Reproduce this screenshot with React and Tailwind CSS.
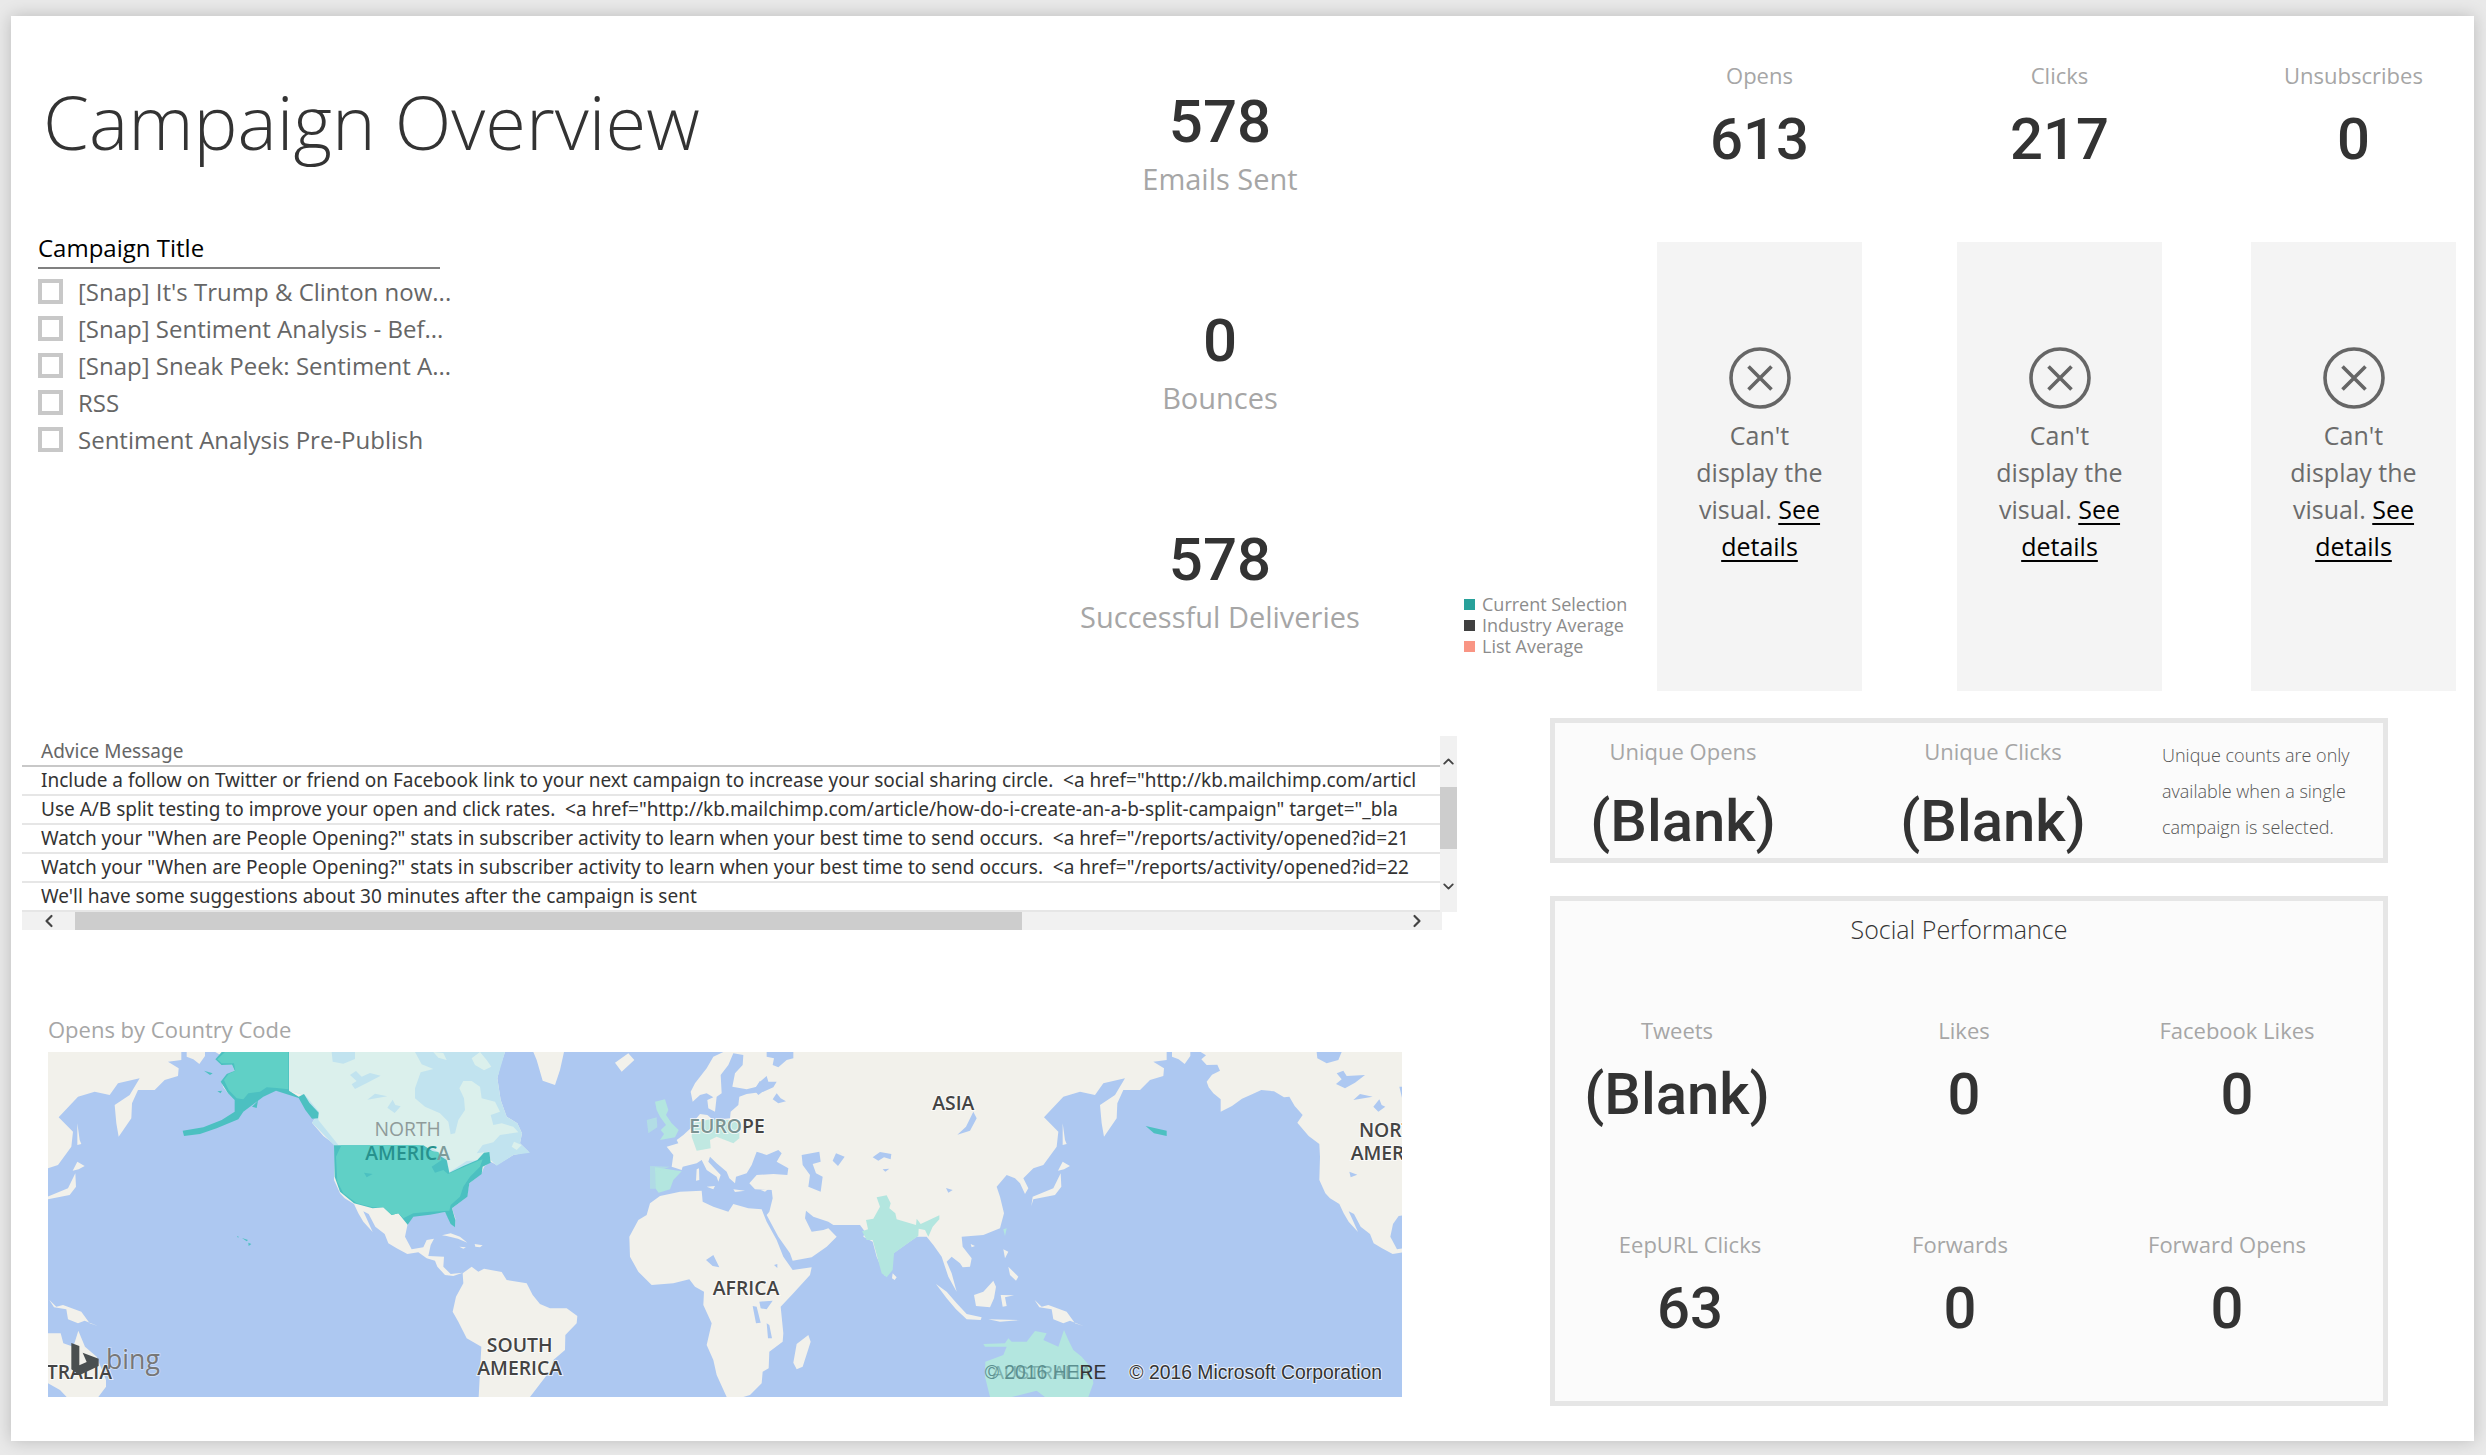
import { ChevronLeft, ChevronRight, ChevronUp, ChevronDown } from 'lucide-react';

const campaigns = [
  "[Snap] It's Trump & Clinton now...",
  '[Snap] Sentiment Analysis - Bef...',
  '[Snap] Sneak Peek: Sentiment A...',
  'RSS',
  'Sentiment Analysis Pre-Publish',
];

const advice = [
  'Include a follow on Twitter or friend on Facebook link to your next campaign to increase your social sharing circle.\u00a0 <a href="http://kb.mailchimp.com/articl',
  'Use A/B split testing to improve your open and click rates.\u00a0 <a href="http://kb.mailchimp.com/article/how-do-i-create-an-a-b-split-campaign" target="_bla',
  'Watch your "When are People Opening?" stats in subscriber activity to learn when your best time to send occurs.\u00a0 <a href="/reports/activity/opened?id=21',
  'Watch your "When are People Opening?" stats in subscriber activity to learn when your best time to send occurs.\u00a0 <a href="/reports/activity/opened?id=22',
  "We'll have some suggestions about 30 minutes after the campaign is sent",
];

const legend = [
  { label: 'Current Selection', dot: 'bg-[#28a19a]' },
  { label: 'Industry Average', dot: 'bg-[#404040]' },
  { label: 'List Average', dot: 'bg-[#f99584]' },
];

const rates = [
  { label: 'Opens', value: '613' },
  { label: 'Clicks', value: '217' },
  { label: 'Unsubscribes', value: '0' },
];

function BigStat({ value, label }) {
  return (
    <div className="flex flex-col items-center whitespace-nowrap">
      <div className="font-[Roboto,sans-serif] font-medium text-[60px] leading-[60px] text-[#333]">{value}</div>
      <div className="text-[29px] leading-10 mt-[7px] text-[#a6a6a6]">{label}</div>
    </div>
  );
}

function Stat({ label, value, gap = 'gap-[18px]', className = '' }) {
  return (
    <div className={`flex flex-col items-center whitespace-nowrap ${gap} ${className}`}>
      <div className="text-[22px] leading-8 text-[#a6a6a6]">{label}</div>
      <div className="font-[Roboto,sans-serif] font-medium text-[58px] leading-[60px] text-[#333]">{value}</div>
    </div>
  );
}

function BrokenVisual() {
  return (
    <div className="w-[205px] h-[449px] bg-[#f4f4f4] flex flex-col items-center pt-[105px]">
      <svg viewBox="0 0 62 62" className="size-[62px]" fill="none" stroke="#666" strokeWidth="3.6">
        <circle cx="31" cy="31" r="29" />
        <path d="M19.5 19.5 L42.5 42.5 M42.5 19.5 L19.5 42.5" />
      </svg>
      <p className="w-[140px] mt-2 text-center text-[25px] leading-[37px] text-[#6b6b6b]">
        Can't display the visual. <a href="#details" className="text-black underline underline-offset-4">See details</a>
      </p>
    </div>
  );
}

function Slicer() {
  return (
    <fieldset className="ml-[27px] w-[402px] min-w-0">
      <legend className="w-full text-[24px] leading-9 pb-px text-black border-b-2 border-[#808080]">Campaign Title</legend>
      <div className="pt-1">
        {campaigns.map((name) => (
          <label key={name} className="flex items-center gap-[15px] h-[37px] text-[24px] leading-9 text-[#666] whitespace-nowrap">
            <input type="checkbox" className="appearance-none size-[25px] shrink-0 border-4 border-[#c8c8c8] bg-white" />
            {name}
          </label>
        ))}
      </div>
    </fieldset>
  );
}

function AdviceTable() {
  return (
    <div className="ml-[11px] mr-[93px]">
      <div className="flex">
        <div className="flex-1 min-w-0 overflow-hidden pt-[2px]">
          <table className="w-full table-fixed border-collapse font-['Noto_Sans',sans-serif] text-[19px] leading-[27px] whitespace-nowrap">
            <thead>
              <tr className="border-b-2 border-[#c8c8c8]">
                <th scope="col" className="p-0 pl-[19px] text-left font-normal text-[#666]">Advice Message</th>
              </tr>
            </thead>
            <tbody>
              {advice.map((row) => (
                <tr key={row} className="border-b-2 border-[#e6e6e6]">
                  <td className="p-0 pl-[19px] text-[#333] overflow-hidden">{row}</td>
                </tr>
              ))}
            </tbody>
          </table>
        </div>
        <div className="w-[17px] shrink-0 flex flex-col items-center bg-[#f1f1f1] text-[#444]">
          <button type="button" aria-label="Scroll up" className="h-[51px]"><ChevronUp size={17} strokeWidth={2.6} /></button>
          <div className="h-[62px] w-full bg-[#cdcdcd]" />
          <button type="button" aria-label="Scroll down" className="mt-auto h-[52px]"><ChevronDown size={17} strokeWidth={2.6} /></button>
        </div>
      </div>
      <div className="mr-[15px] h-[18px] flex items-center bg-[#f1f1f1] text-[#444]">
        <button type="button" aria-label="Scroll left" className="w-[53px] flex justify-center"><ChevronLeft size={20} strokeWidth={2.6} /></button>
        <div className="h-full w-2/3 bg-[#cdcdcd]" />
        <button type="button" aria-label="Scroll right" className="ml-auto w-[50px] flex justify-center"><ChevronRight size={20} strokeWidth={2.6} /></button>
      </div>
    </div>
  );
}

const NORTH_AMERICA = 'M556 156 L572 166 L558 178 L574 195 L606 194 L614 212 L590 224 L574 245 L580 262 L594 280 L616 298 L616 335 L650 318 L680 296 L712 282 L738 270 L776 274 L806 292 L822 290 L838 318 L862 345 L846 368 L880 408 L912 432 L914 470 L912 540 L930 580 L944 595 L972 612 L985 640 L1000 665 L1028 696 L1012 660 L1000 634 L1016 642 L1036 680 L1064 702 L1075 730 L1100 745 L1132 762 L1165 757 L1190 775 L1215 782 L1222 800 L1245 825 L1270 828 L1298 818 L1262 822 L1240 800 L1242 770 L1195 768 L1202 735 L1212 716 L1190 720 L1180 742 L1145 748 L1125 710 L1133 672 L1150 648 L1200 640 L1245 636 L1262 665 L1275 682 L1276 655 L1266 625 L1310 590 L1318 550 L1355 520 L1362 500 L1382 485 L1400 495 L1450 465 L1496 455 L1470 430 L1476 400 L1462 370 L1430 350 L1412 300 L1402 235 L1410 200 L1425 156 Z';
const SOUTH_AMERICA = 'M1298 820 L1325 800 L1345 815 L1362 806 L1415 816 L1430 840 L1490 850 L1508 885 L1530 912 L1560 925 L1610 925 L1642 948 L1640 970 L1606 1005 L1605 1050 L1570 1080 L1562 1110 L1500 1191 L1346 1191 L1354 1040 L1310 1015 L1285 965 L1268 935 L1278 890 L1300 850 Z';
const EURASIA = 'M670 36 L640 50 L620 85 L585 130 L572 155 L578 185 L600 165 L620 160 L640 172 L622 180 L625 205 L645 215 L650 170 L665 160 L662 105 L685 75 L700 40 L730 45 L728 75 L705 100 L697 140 L740 148 L770 140 L780 125 L800 108 L805 125 L830 125 L820 142 L790 155 L740 162 L718 170 L715 195 L692 215 L690 235 L640 240 L622 225 L600 222 L585 240 L572 265 L550 285 L530 300 L535 310 L500 320 L520 345 L515 380 L545 390 L548 380 L590 370 L605 360 L620 390 L650 410 L655 425 L662 405 L625 365 L630 350 L650 370 L680 395 L688 415 L705 430 L708 410 L740 400 L755 375 L770 335 L800 345 L835 330 L845 340 L830 365 L865 385 L862 405 L820 402 L770 405 L748 430 L765 448 L815 450 L818 475 L808 515 L800 525 L835 590 L870 640 L878 662 L935 652 L980 620 L1010 590 L985 565 L970 570 L935 575 L915 535 L918 512 L940 530 L985 545 L1000 555 L1080 555 L1095 575 L1090 590 L1118 605 L1130 650 L1155 708 L1175 690 L1180 640 L1250 590 L1280 590 L1300 615 L1325 650 L1335 680 L1345 710 L1370 755 L1355 700 L1340 665 L1355 650 L1380 670 L1388 682 L1410 680 L1415 655 L1388 620 L1385 590 L1450 585 L1500 565 L1512 520 L1500 470 L1490 440 L1520 405 L1545 415 L1560 430 L1575 462 L1585 445 L1570 415 L1600 385 L1630 375 L1670 320 L1675 275 L1632 232 L1690 170 L1740 155 L1785 165 L1810 130 L1875 115 L1845 165 L1800 195 L1805 250 L1812 290 L1850 235 L1852 190 L1870 150 L1920 150 L1950 120 L1990 108 L1992 85 L1960 65 L2000 60 L2000 36 Z';
const AFRICA = 'M480 468 L540 455 L605 452 L608 485 L640 500 L685 515 L700 492 L745 505 L785 508 L800 545 L830 600 L850 650 L878 690 L935 682 L930 705 L880 760 L842 800 L850 880 L848 905 L808 935 L806 985 L788 995 L785 1030 L750 1065 L730 1071 L680 1071 L650 1005 L640 960 L620 915 L635 850 L610 795 L612 755 L585 740 L568 718 L520 730 L455 735 L415 695 L390 650 L388 590 L415 540 L440 525 L450 490 Z';

// One full turn of the map, repeated so it wraps round at both edges.
function World() {
  return (
    <g fill="#f2f1eb">
      <g transform="translate(-54 -156)">
        <path d={NORTH_AMERICA} />
        <path d={SOUTH_AMERICA} />
        <path d="M1236 706 L1262 700 L1290 710 L1312 728 L1284 716 L1250 708 Z M1334 732 L1358 736 L1350 742 L1336 740 Z M1288 740 L1308 742 L1300 746 Z" />
        <path d="M470 156 L525 156 L525 168 L508 192 L490 178 L470 170 Z" />
      </g>
      <g transform="translate(1356 -36)">
        <path d={EURASIA} />
        <path d={AFRICA} />
        <path d="M100 36 L192 36 L180 90 L165 135 L128 122 L110 60 Z M345 68 L385 40 L403 60 L365 95 Z" />
        <path d="M925 885 L932 905 L908 980 L890 988 L880 968 L890 912 Z M1178 700 L1190 712 L1184 720 L1176 715 Z" />
        <path d="M620 440 L645 438 L640 448 Z M590 388 L597 385 L598 420 L588 422 Z M700 448 L735 452 L705 456 Z M782 450 L806 446 L795 455 Z" />
        <path d="M1308 732 L1340 755 L1370 790 L1400 822 L1445 832 L1442 840 L1400 838 L1368 808 L1340 775 Z M1465 838 L1560 840 L1500 845 Z" />
        <path d="M1422 765 L1450 755 L1480 722 L1488 740 L1482 775 L1470 802 L1428 798 Z M1502 765 L1542 766 L1515 772 L1520 798 L1508 800 Z" />
        <path d="M1604 780 L1625 800 L1645 795 L1700 815 L1725 850 L1750 858 L1710 842 L1690 850 L1660 838 L1655 808 L1618 802 Z" />
        <path d="M1510 628 L1525 635 L1515 655 Z M1525 680 L1555 710 L1548 722 L1530 705 Z M1412 612 L1425 618 L1415 622 Z" />
        <path d="M1688 250 L1695 300 L1700 312 L1688 315 Z M1688 365 L1710 378 L1692 388 L1674 392 Z M1682 400 L1684 440 L1665 465 L1600 478 L1594 498 L1598 470 L1660 445 Z" />
      </g>
    </g>
  );
}

function Waters() {
  return (
    <g fill="#adc8f1">
      <g transform="translate(1356 -36)">
        <path d="M800 36 L880 36 L880 55 L860 60 L835 82 L818 75 L822 55 L800 50 Z M830 160 L842 175 L858 184 L835 190 L818 178 Z M762 150 L780 122 L795 150 L775 165 Z" />
        <path d="M905 345 L958 335 L962 365 L938 372 L948 400 L968 410 L962 455 L925 440 L930 405 L908 375 Z" />
        <path d="M1008 340 L1034 350 L1014 378 L998 362 Z M1118 352 L1140 336 L1174 342 L1172 358 L1152 352 L1135 362 Z M1148 388 L1168 386 L1156 395 Z" />
        <path d="M1420 215 L1430 235 L1410 272 L1372 284 L1398 260 Z M1338 444 L1358 450 L1345 458 Z" />
        <path d="M618 660 L640 645 L658 682 L638 678 Z M778 785 L818 782 L800 808 L782 805 Z M758 798 L770 800 L782 848 L768 850 Z M800 850 L808 855 L816 895 L804 895 Z M822 675 L832 672 L832 684 Z" />
      </g>
      <g transform="translate(2676 -36)">
        <path d="M1130 36 L1205 36 L1195 60 L1160 70 L1132 55 Z M1190 100 L1210 92 L1220 108 L1275 105 L1245 128 L1215 145 L1188 132 L1205 118 Z M1240 180 L1260 162 L1298 170 Z M1318 178 L1325 195 L1336 200 L1315 215 L1300 200 Z M1378 140 L1388 140 L1388 182 Z M1228 395 L1252 404 L1232 412 Z" />
      </g>
    </g>
  );
}

function Label({ x, y, children }) {
  return (
    <text x={x} y={y} textAnchor="middle" fontSize="58" fontWeight="600" fill="#444" stroke="#fff" strokeOpacity="0.7" strokeWidth="6" paintOrder="stroke">
      {children}
    </text>
  );
}

function CountryMap() {
  return (
    <svg viewBox="0 0 4062 1035" className="block w-full" role="img" aria-label="Opens by Country Code">
      <rect width="4062" height="1035" fill="#adc8f1" />
      <World />
      <g transform="translate(-2956 0)"><World /></g>
      <g transform="translate(2956 0)"><World /></g>
      <Waters />

      <path transform="translate(-54 -156)" fill="#f2f1eb" d="M54 1000 L92 1000 L100 1030 L130 1040 L145 992 L165 1040 L200 1070 L228 1140 L228 1160 L205 1191 L110 1191 L90 1170 L54 1150 Z" />
      <Label x="94" y="980">TRALIA</Label>

      {/* Canada: coastal waters first, then the land on top */}
      <path transform="translate(-54 -156)" fill="#c1e3ef" d="M777 156 L1425 156 L1402 235 L1412 300 L1430 350 L1462 370 L1476 400 L1470 430 L1500 458 L1450 465 L1400 497 L1382 480 L1376 458 L1360 480 L1255 520 L1250 480 L1180 436 L912 436 L846 368 L862 345 L820 285 L777 272 Z" />
      <g transform="translate(756 -21)">
        <path fill="#dbf0ec" d="M-33 21 L95 21 L98 50 L130 56 L165 42 L165 21 L345 21 L365 58 L400 72 L362 82 L345 130 L345 160 L375 185 L420 205 L445 230 L452 268 L465 265 L475 225 L495 195 L492 160 L478 130 L490 108 L515 108 L540 125 L545 160 L585 170 L600 200 L572 210 L580 240 L605 235 L640 245 L655 262 L600 270 L580 292 L548 300 L530 325 L566 320 L552 345 L500 348 L448 382 L440 340 L400 312 L345 300 L115 300 L55 225 L57 200 L15 150 L-33 137 Z" />
        <path fill="#dbf0ec" d="M515 40 L540 21 L560 45 L574 65 L552 76 L525 60 Z M400 21 L430 24 L440 45 L415 38 Z M642 290 L665 300 L650 315 L635 305 Z" />
        <path fill="#c1e3ef" d="M150 90 L168 78 L185 95 L210 84 L242 92 L205 112 L165 132 L155 118 L170 108 Z M202 164 L225 146 L262 154 Z M278 164 L286 180 L302 184 L284 204 L262 188 Z" />
      </g>

      {/* United States */}
      <g transform="translate(-54 -156)">
        <path fill="#4cc0c1" d="M575 156 L777 156 L777 272 L806 290 L822 282 L838 308 L866 338 L864 355 L846 356 L826 330 L806 294 L738 272 L700 290 L640 335 L625 358 L560 385 L510 402 L462 408 L458 392 L520 382 L575 360 L614 335 L614 300 L594 280 L572 245 L590 222 L614 212 L606 194 L574 195 L556 178 Z M666 320 L684 302 L680 324 Z M522 212 L548 220 L540 225 Z M562 274 L576 272 L572 280 Z" />
        <path fill="#60d0c6" d="M585 156 L775 156 L775 268 L740 264 L710 262 L690 275 L655 280 L640 298 L620 295 L596 270 L582 240 L596 222 L616 212 L612 190 L575 190 L562 178 Z" />
        <path fill="#4cc0c1" d="M912 436 L1180 436 L1250 480 L1258 518 L1300 498 L1342 480 L1362 458 L1378 456 L1382 488 L1358 500 L1355 522 L1318 550 L1312 590 L1266 625 L1276 660 L1275 682 L1262 672 L1245 636 L1200 644 L1150 650 L1133 674 L1105 640 L1085 645 L1060 622 L1028 625 L972 610 L930 575 L914 530 Z" />
        <path fill="#60d0c6" d="M934 436 L1165 436 L1180 450 L1225 456 L1235 480 L1205 500 L1215 518 L1240 510 L1254 522 L1345 482 L1358 478 L1350 500 L1320 530 L1300 560 L1290 590 L1262 615 L1258 632 L1200 635 L1150 640 L1120 655 L1105 640 L1085 645 L1060 622 L1028 622 L980 610 L940 580 L922 545 L918 470 Z" />
        <path fill="#4cc0c1" d="M1002 518 L1028 522 L1010 532 Z M622 708 L628 712 L622 712 Z M636 714 L654 720 L650 724 Z M655 728 L664 732 L656 738 Z" />
      </g>
      <path transform="translate(2676 -36)" fill="#4cc0c1" d="M617 258 L680 272 L680 288 L642 280 Z" />

      {/* Europe and India */}
      <g transform="translate(1356 -36)" fill="#b3e6df">
        <path d="M465 185 L495 178 L505 210 L498 225 L515 250 L536 270 L525 292 L480 300 L492 282 L482 270 L498 255 L480 230 L470 210 Z" />
        <path d="M440 240 L470 232 L472 262 L445 280 Z" opacity="0.7" />
        <path d="M465 382 L545 394 L520 420 L510 448 L476 458 L466 445 Z" />
        <path d="M450 378 L510 380 L466 396 L466 446 L450 446 Z" opacity="0.6" />
        <path d="M578 250 L630 238 L690 240 L718 250 L718 295 L700 310 L650 290 L630 300 L632 325 L590 332 L575 290 Z" opacity="0.8" />
        <path d="M1130 472 L1160 466 L1172 490 L1168 505 L1186 520 L1190 538 L1248 555 L1250 536 L1262 552 L1318 526 L1318 538 L1298 560 L1285 590 L1275 570 L1256 566 L1255 588 L1230 605 L1182 640 L1178 690 L1160 712 L1145 700 L1118 600 L1100 600 L1086 574 L1104 568 L1098 540 L1120 536 L1140 500 Z" />
        <path d="M1510 568 L1520 565 L1515 588 Z" />
      </g>

      {/* Australia */}
      <path transform="translate(2676 -36)" fill="#b3e6df" d="M130 912 L195 910 L205 895 L215 905 L260 905 L285 873 L320 880 L310 900 L355 920 L372 870 L385 900 L400 930 L425 950 L455 985 L460 1030 L445 1071 L315 1071 L290 1052 L215 1071 L150 1071 L135 1010 L136 965 L190 945 L200 920 L135 920 Z" />

      <text x="1079" y="253" textAnchor="middle" fontSize="58" fontWeight="500" fill="#8f9b9a">NORTH</text>
      <text x="1079" y="323" textAnchor="middle" fontSize="58" fontWeight="600" fill="#27918d">AMERIC<tspan fill="#7d9b9a">A</tspan></text>
      <Label x="1415" y="899">SOUTH</Label>
      <Label x="1415" y="968">AMERICA</Label>
      <Label x="2037" y="242"><tspan fill="#7b9392">EURO</tspan>PE</Label>
      <Label x="2094" y="728">AFRICA</Label>
      <Label x="2716" y="173">ASIA</Label>
      <Label x="4035" y="254">NORTH</Label>
      <Label x="4035" y="323">AMERICA</Label>

      <g fontSize="58" fontFamily="Liberation Sans, sans-serif">
        <text x="2982" y="982" textAnchor="middle" fontSize="54" fill="#5b8f8f" opacity="0.6">AUSTRALIA</text>
        <text x="2810" y="982" fill="#5b8f8f">© 2016 HE<tspan fill="#333">RE</tspan></text>
        <text x="3244" y="982" fill="#333" stroke="#fff" strokeOpacity="0.7" strokeWidth="6" paintOrder="stroke">© 2016 Microsoft Corporation</text>
      </g>

      <path fill="#4a4f50" d="M70 873 L94 882 L94 940 L116 930 L104 902 L152 920 L152 942 L94 970 L70 952 Z" />
      <text x="174" y="952" fontSize="80" fill="#777" stroke="#fff" strokeOpacity="0.4" strokeWidth="5" paintOrder="stroke">bing</text>
    </svg>
  );
}

export default function App() {
  return (
    <div className="min-h-screen flex bg-[#e9e9e9] pt-4 pb-[15px] pl-[11px] pr-3 font-['Open_Sans',sans-serif]">
      <main className="flex-1 min-w-0 bg-white shadow-[0_0_16px_rgba(0,0,0,0.2)]">
        <div className="grid grid-cols-[1018fr_382fr_235fr_828fr]">
          <section className="pt-[54px]">
            <h1 className="ml-8 text-[74px] leading-[104px] font-light text-[#333] whitespace-nowrap">Campaign Overview</h1>
            <div className="mt-14"><Slicer /></div>
          </section>

          <section className="pt-[76px] flex flex-col gap-[112px]">
            <BigStat value="578" label="Emails Sent" />
            <BigStat value="0" label="Bounces" />
            <BigStat value="578" label="Successful Deliveries" />
          </section>

          <ul className="self-end mb-[34px] ml-[53px] text-[18px] leading-[21px] text-[#8c8c8c] whitespace-nowrap">
            {legend.map(({ label, dot }) => (
              <li key={label} className="flex items-center gap-[7px]">
                <span className={`size-[11px] ${dot}`} />
                {label}
              </li>
            ))}
          </ul>

          <section className="grid grid-cols-[300fr_294fr_205fr] pt-[43px] pl-[11px] pr-[18px]">
            {rates.map(({ label, value }) => (
              <div key={label} className="w-[205px]">
                <Stat label={label} value={value} />
                <div className="mt-[73px]"><BrokenVisual /></div>
              </div>
            ))}
          </section>
        </div>

        <div className="grid grid-cols-[1539fr_924fr] pt-[27px] pb-[35px]">
          <section className="pt-[18px]">
            <AdviceTable />
            <div className="mt-[83px] ml-[37px] mr-[148px]">
              <h2 className="text-[22px] leading-8 mb-[7px] text-[#a6a6a6]">Opens by Country Code</h2>
              <CountryMap />
            </div>
          </section>

          <section className="pr-[86px] flex flex-col gap-[33px]">
            <div className="grid grid-cols-[256fr_344fr_228fr] h-[145px] border-5 border-[#e6e6e6] bg-[#fbfbfb] pt-3">
              <Stat label="Unique Opens" value="(Blank)" gap="gap-6" />
              <Stat label="Unique Clicks" value="(Blank)" gap="gap-6" className="ml-5" />
              <p className="pt-[2px] pl-[7px] text-[18px] leading-9 font-light text-[#555] whitespace-nowrap">
                Unique counts are only<br />available when a single<br />campaign is selected.
              </p>
            </div>

            <div className="h-[510px] border-5 border-[#e6e6e6] bg-[#fbfbfb]">
              <h2 className="mr-5 pt-2 text-center text-[25px] leading-10 font-light text-[#333]">Social Performance</h2>
              <div className="mt-[65px] grid grid-cols-[244fr_330fr_216fr_38fr]">
                <Stat label="Tweets" value="(Blank)" />
                <Stat label="Likes" value="0" />
                <Stat label="Facebook Likes" value="0" />
              </div>
              <div className="mt-[104px] grid grid-cols-[270fr_270fr_264fr_24fr]">
                <Stat label="EepURL Clicks" value="63" />
                <Stat label="Forwards" value="0" />
                <Stat label="Forward Opens" value="0" />
              </div>
            </div>
          </section>
        </div>
      </main>
    </div>
  );
}
